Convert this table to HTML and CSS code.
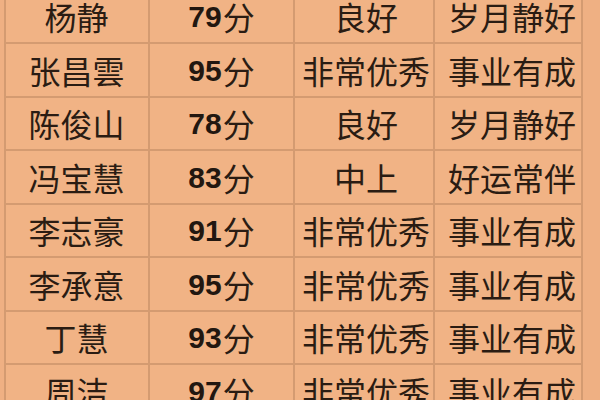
FILE: index.html
```html
<!DOCTYPE html>
<html lang="zh">
<head>
<meta charset="utf-8">
<link rel="stylesheet" href="styles.css">
</head>
<body>
<div class="sheet">
  <div class="cell name">杨静</div><div class="cell score"><span class="num">79</span>分</div><div class="cell grade">良好</div><div class="cell note">岁月静好</div>
  <div class="cell name">张昌雲</div><div class="cell score"><span class="num">95</span>分</div><div class="cell grade">非常优秀</div><div class="cell note">事业有成</div>
  <div class="cell name">陈俊山</div><div class="cell score"><span class="num">78</span>分</div><div class="cell grade">良好</div><div class="cell note">岁月静好</div>
  <div class="cell name">冯宝慧</div><div class="cell score"><span class="num">83</span>分</div><div class="cell grade">中上</div><div class="cell note">好运常伴</div>
  <div class="cell name">李志豪</div><div class="cell score"><span class="num">91</span>分</div><div class="cell grade">非常优秀</div><div class="cell note">事业有成</div>
  <div class="cell name">李承意</div><div class="cell score"><span class="num">95</span>分</div><div class="cell grade">非常优秀</div><div class="cell note">事业有成</div>
  <div class="cell name">丁慧</div><div class="cell score"><span class="num">93</span>分</div><div class="cell grade">非常优秀</div><div class="cell note">事业有成</div>
  <div class="cell name">周洁</div><div class="cell score"><span class="num">97</span>分</div><div class="cell grade">非常优秀</div><div class="cell note">事业有成</div>
</div>
</body>
</html>
```
FILE: styles.css
```css
html, body {
  margin: 0;
  padding: 0;
  background: #efb083;
  overflow: hidden;
  height: 400px;
}
body {
  font-family: "Noto Sans CJK SC", "Noto Sans", sans-serif;
  color: #2a1c13;
}
.sheet {
  margin: -9.5px 0 0 4px;
  width: 579px;
  display: grid;
  grid-template-columns: 142px 143px 138px 146px;
  grid-auto-rows: 51.5px;
  gap: 2px;
  padding: 0 2px 2px 2px;
  background: #d49b71;
  box-sizing: border-box;
}
.cell {
  background: #f1b385;
  display: flex;
  align-items: center;
  justify-content: center;
  font-size: 32px;
  line-height: 1;
  white-space: nowrap;
}
.name {
  padding-right: 1px;
}
.grade {
  padding-left: 4px;
}
.note {
  padding-left: 8px;
}
.num {
  font-family: "Liberation Sans", Arial, sans-serif;
  font-weight: 700;
  font-size: 30px;
  color: #221710;
  margin-right: 1px;
  position: relative;
  top: 1px;
}
```
